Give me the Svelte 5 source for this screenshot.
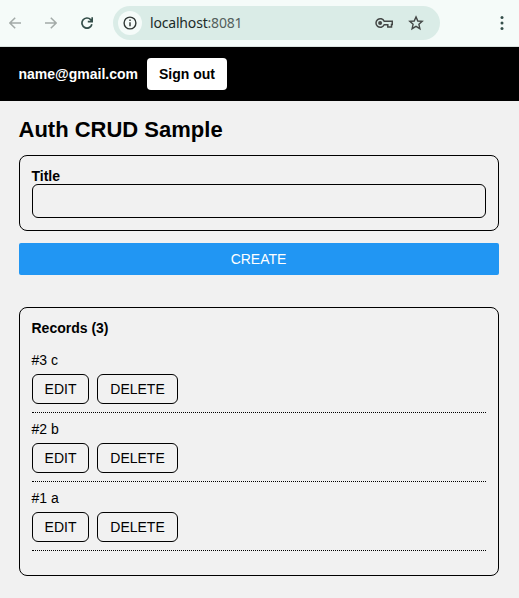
<script>
  let title = $state('');
  const records = [
    { id: 3, title: 'c' },
    { id: 2, title: 'b' },
    { id: 1, title: 'a' }
  ];
</script>

<div class="browser">
  <svg class="back" width="12" height="12" viewBox="0 0 12 12"><path d="M6.2 .7 .9 6l5.3 5.3M1 6h11" /></svg>
  <svg class="forward" width="12" height="12" viewBox="0 0 12 12"><path d="M5.8 .7 11.1 6l-5.3 5.3M11 6H0" /></svg>
  <svg class="reload" width="12" height="12" viewBox="0 0 12 12"><path d="M10.9 7.3A5.05 5.05 0 1 1 9.7 2.6L11 4.2M11.2 .2v4.5H6.8" /></svg>
  <div class="address">
    <span class="info">
      <svg width="14" height="14" viewBox="0 0 14 14">
        <circle cx="7" cy="7" r="5.9" />
        <path d="M7 6.2v4.1M7 3.5v1.6" />
      </svg>
    </span>
    <span class="url">localhost<span>:8081</span></span>
    <svg class="key" width="18" height="12" viewBox="0 0 18 12">
      <path d="M9.2 4.2H17.3V7.5H16.5V10H12.8V7.8H9.2A4.3 4.3 0 1 1 9.2 4.2Z" />
      <circle cx="5.1" cy="6" r="2" />
    </svg>
    <svg class="star" width="16" height="16" viewBox="0 0 16 16"><path d="M8 1.9 9.8 6l4.4.4-3.3 2.9 1 4.4L8 11.3l-3.9 2.4 1-4.4-3.3-2.9L6.2 6Z" /></svg>
  </div>
  <svg class="more" width="4" height="14" viewBox="0 0 4 14"><circle cx="2" cy="1.6" r="1.5" /><circle cx="2" cy="7" r="1.5" /><circle cx="2" cy="12.4" r="1.5" /></svg>
</div>

<header>
  <strong>name@gmail.com</strong>
  <button>Sign out</button>
</header>

<main>
  <h1>Auth CRUD Sample</h1>
  <form onsubmit={(event) => event.preventDefault()}>
    <div class="card">
      <label for="title">Title</label>
      <input id="title" bind:value={title} />
    </div>
    <button class="create">CREATE</button>
  </form>
  <section class="card records">
    <h2>Records ({records.length})</h2>
    {#each records as record (record.id)}
      <article>
        <p>#{record.id} {record.title}</p>
        <div class="actions">
          <button class="edit">EDIT</button>
          <button class="delete">DELETE</button>
        </div>
      </article>
    {/each}
  </section>
</main>

<style>
  :global(body) {
    margin: 0;
    background: #f1f1f1;
    color: #000;
    font: 14px/16px "Liberation Sans", Arial, sans-serif;
  }
  :global(*) { box-sizing: border-box; }
  svg { display: block; flex: none; fill: none; stroke: #444746; stroke-width: 1.6; }
  button { padding: 0; font: inherit; color: inherit; }

  .browser {
    display: flex;
    align-items: center;
    height: 47px;
    padding: 0 15px 0 9px;
    background: #f5fbf9;
    border-bottom: 1px solid #d9e2df;
  }
  .back, .forward { stroke: #a3aaa8; stroke-width: 1.5; }
  .forward { margin-left: 24px; }
  .reload { margin-left: 24px; stroke: #354f4b; stroke-width: 1.7; }
  .address {
    display: flex;
    align-items: center;
    width: 327px;
    height: 34px;
    margin-left: 20px;
    padding: 0 16px 0 5px;
    border-radius: 17px;
    background: #daece7;
  }
  .info {
    display: flex;
    align-items: center;
    justify-content: center;
    width: 24px;
    height: 24px;
    border-radius: 50%;
    background: #f5fbf9;
  }
  .info svg { stroke: #303735; stroke-width: 1.4; }
  .url {
    margin-left: 8px;
    font: 14px/20px "Noto Sans", sans-serif;
    letter-spacing: -0.18px;
    color: #202b28;
  }
  .url span { color: #53605c; }
  .key { margin-left: auto; stroke-width: 1.5; }
  .key circle { fill: #444746; stroke: none; }
  .star { margin-left: 15px; stroke-width: 1.4; }
  .more { margin-left: auto; fill: #354f4b; stroke: none; }

  header {
    display: flex;
    align-items: center;
    gap: 9px;
    height: 54px;
    padding-left: 19px;
    background: #000;
    color: #fff;
  }
  header strong { width: 119px; text-indent: -0.5px; }
  header button {
    width: 80px;
    height: 32px;
    border: 0;
    border-radius: 4px;
    background: #fff;
    color: #000;
    font-weight: bold;
  }

  main { padding: 16px 20px 22px 19px; }
  h1 { margin: 0 0 13px; font-size: 22px; line-height: 25px; }
  h1, h2, p, label { text-indent: -0.5px; }
  .card { border: 1px solid #000; border-radius: 8px; padding: 12px; }
  label { display: block; font-weight: bold; }
  input {
    display: block;
    width: 100%;
    height: 34px;
    padding: 0 8px;
    border: 1px solid #000;
    border-radius: 6px;
    background: transparent;
    font: inherit;
    outline: none;
  }
  .create {
    display: block;
    width: 100%;
    height: 32px;
    margin: 12px 0 32px;
    padding-right: 1px;
    border: 0;
    border-radius: 2px;
    background: #2196f3;
    color: #fff;
  }
  h2 { margin: 0 0 8px; font-size: 14px; line-height: 16px; }
  .records { height: 269px; }
  article { padding: 8px 0; border-bottom: 1px dotted #000; }
  article p { margin: 0 0 6px; }
  .actions { display: flex; gap: 8px; }
  .actions button {
    height: 30px;
    border: 1px solid #000;
    border-radius: 6px;
    background: transparent;
  }
  .edit { width: 57px; }
  .delete { width: 81px; }
</style>
